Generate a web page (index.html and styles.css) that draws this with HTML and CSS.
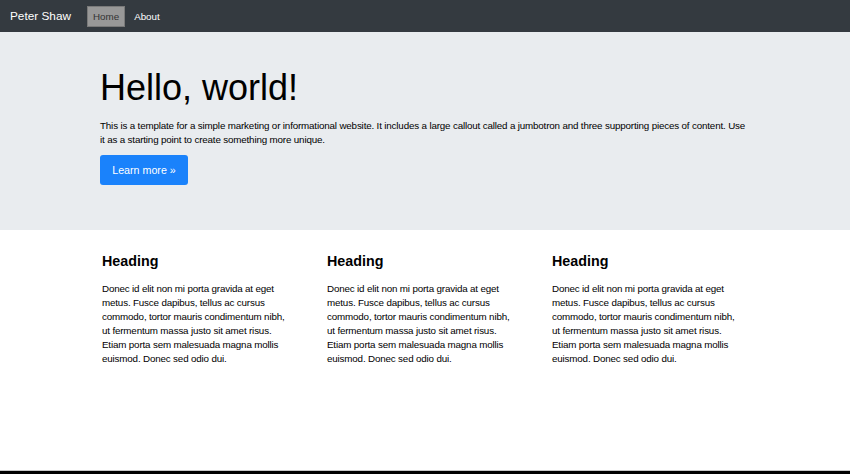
FILE: index.html
```html
<!DOCTYPE html>
<html>
<head>
<meta charset="utf-8">
<link rel="stylesheet" href="styles.css">
</head>
<body>
<div class="page">
  <nav class="navbar">
    <span class="brand">Peter Shaw</span>
    <a class="nav-link active">Home</a>
    <a class="nav-link">About</a>
  </nav>
  <section class="jumbotron">
    <div class="jumbo-inner">
      <h1>Hello, world!</h1>
      <p>This is a template for a simple marketing or informational website. It includes a large callout called a jumbotron and three supporting pieces of content. Use it as a starting point to create something more unique.</p>
      <a class="btn">Learn more »</a>
    </div>
  </section>
  <main class="columns">
    <div class="col">
      <h2>Heading</h2>
      <p>Donec id elit non mi porta gravida at eget metus. Fusce dapibus, tellus ac cursus commodo, tortor mauris condimentum nibh, ut fermentum massa justo sit amet risus. Etiam porta sem malesuada magna mollis euismod. Donec sed odio dui.</p>
    </div>
    <div class="col">
      <h2>Heading</h2>
      <p>Donec id elit non mi porta gravida at eget metus. Fusce dapibus, tellus ac cursus commodo, tortor mauris condimentum nibh, ut fermentum massa justo sit amet risus. Etiam porta sem malesuada magna mollis euismod. Donec sed odio dui.</p>
    </div>
    <div class="col">
      <h2>Heading</h2>
      <p>Donec id elit non mi porta gravida at eget metus. Fusce dapibus, tellus ac cursus commodo, tortor mauris condimentum nibh, ut fermentum massa justo sit amet risus. Etiam porta sem malesuada magna mollis euismod. Donec sed odio dui.</p>
    </div>
  </main>
  <div class="bottom-edge"></div>
</div>
</body>
</html>
```
FILE: styles.css
```css
* { box-sizing: border-box; }
html, body { margin: 0; padding: 0; }
body {
  font-family: "Liberation Sans", Arial, sans-serif;
  color: #000;
  background: #fff;
  width: 850px;
  height: 474px;
  overflow: hidden;
}
.page {
  display: flex;
  flex-direction: column;
  height: 474px;
}
.navbar {
  height: 32px;
  background: #343a40;
  display: flex;
  align-items: center;
  padding: 0 0 0 10px;
  flex: none;
}
.brand {
  color: #fff;
  font-size: 11.8px;
  margin-right: 16px;
}
.nav-link {
  color: #fff;
  font-size: 9.8px;
  padding: 0 5px;
  height: 21px;
  line-height: 19px;
  border: 1px solid transparent;
  margin-right: 3px;
}
.nav-link.active {
  background: #989898;
  border-color: #7a7a7a;
  color: #333;
}
.jumbotron {
  height: 198px;
  background: #e9ecef;
  flex: none;
}
.jumbo-inner {
  padding: 35px 0 0 100px;
  width: 750px;
}
h1 {
  margin: 0;
  font-weight: 400;
  font-size: 36px;
  line-height: 42px;
  color: #000;
}
.jumbo-inner p {
  margin: 10px 0 9px;
  font-size: 9.8px;
  letter-spacing: -0.16px;
  line-height: 13.5px;
  color: #000;
}
.btn {
  display: inline-block;
  background: #1a82fb;
  color: #fff;
  font-size: 10.7px;
  width: 88px;
  height: 30px;
  line-height: 30px;
  text-align: center;
  border-radius: 3px;
}
.columns {
  flex: 1;
  display: flex;
  padding: 22px 0 0 102px;
  gap: 35px;
}
.col { width: 190px; }
h2 {
  margin: 0 0 12px;
  font-size: 14.3px;
  line-height: 18px;
  font-weight: 700;
  color: #000;
}
.col p {
  margin: 0;
  font-size: 9.8px;
  letter-spacing: -0.16px;
  line-height: 14px;
  color: #000;
}
.bottom-edge {
  flex: none;
  height: 4px;
  background: #000;
  border-top: 1px solid #c8c8c8;
}
```
